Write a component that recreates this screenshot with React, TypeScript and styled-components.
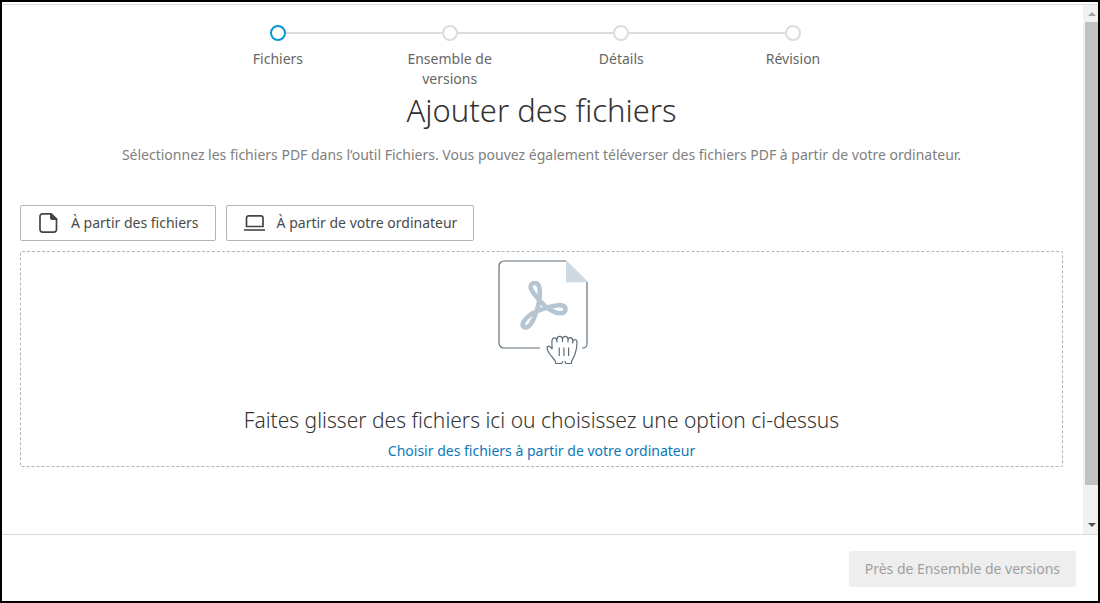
import React from 'react';
import styled, { createGlobalStyle } from 'styled-components';

const GlobalStyle = createGlobalStyle`
  *, *::before, *::after { box-sizing: border-box; }
  body { margin: 0; background: #fff; }
  body, button { font-family: 'Noto Sans', 'Open Sans', sans-serif; }
`;

const Frame = styled.div`
  display: flex;
  flex-direction: column;
  min-height: 100vh;
  padding-top: 2px;
  border: 2px solid #000;
  background: #fff;
`;

const Viewport = styled.div`
  display: flex;
  flex: 1;
  border-top: 1px solid #dcdcdc;
`;

const Content = styled.main`
  flex: 1;
  min-width: 0;
  padding: 20px 20px 20px 18px;
`;

const Steps = styled.ol`
  display: grid;
  grid-template-columns: repeat(4, 1fr);
  width: 67%;
  margin: 0 auto;
  padding: 0 12px 0 0;
  list-style: none;
`;

const Step = styled.li`
  display: flex;
  flex-direction: column;
  align-items: center;
  gap: 8px;
  color: #666;
  font-size: 14px;
  line-height: 20px;
  text-align: center;
`;

const Marker = styled.span`
  display: flex;
  align-items: center;
  width: 100%;
`;

const Line = styled.span<{ $hidden?: boolean }>`
  flex: 1;
  height: 2px;
  background: ${(p) => (p.$hidden ? 'transparent' : '#dcdcdc')};
`;

const Dot = styled.span<{ $active?: boolean }>`
  width: 16px;
  height: 16px;
  border: 2px solid ${(p) => (p.$active ? '#0696d7' : '#dcdcdc')};
  border-radius: 50%;
`;

const StepLabel = styled.span`
  max-width: 104px;
`;

const Title = styled.h1`
  margin: 0;
  color: #333;
  font-size: 31px;
  font-weight: 300;
  line-height: 42px;
  text-align: center;
`;

const Intro = styled.p`
  margin: 14px 0 40px;
  color: #808080;
  font-size: 14px;
  line-height: 20px;
  text-align: center;
`;

const Sources = styled.div`
  display: flex;
  gap: 10px;
  margin-bottom: 10px;
`;

const SourceButton = styled.button`
  display: flex;
  align-items: center;
  gap: 10px;
  height: 36px;
  padding: 0 16px;
  border: 1px solid #b4b4b4;
  border-radius: 2px;
  background: #fff;
  color: #4a4a4a;
  font-size: 14px;
  line-height: 20px;
`;

const DropZone = styled.section`
  display: flex;
  flex-direction: column;
  align-items: center;
  padding: 8px 16px 4px;
  border: 1px dashed #b4b4b4;
  border-radius: 2px;
`;

const DropTitle = styled.h2`
  margin: 40px 0 6px;
  color: #333;
  font-size: 21px;
  font-weight: 300;
  line-height: 28px;
  text-align: center;
`;

const DropLink = styled.a`
  color: #0d78b5;
  font-size: 14px;
  line-height: 22px;
  text-decoration: none;
`;

const ScrollTrack = styled.div`
  display: flex;
  flex-direction: column;
  width: 15px;
  padding-left: 2px;
  background: #f1f1f1;
`;

const ScrollThumb = styled.div`
  flex: 1;
  margin-bottom: 32px;
  background: #c1c1c1;
`;

const Footer = styled.footer`
  display: flex;
  justify-content: flex-end;
  padding: 16px 22px 14px;
  border-top: 1px solid #d8d8d8;
`;

const NextButton = styled.button`
  height: 36px;
  padding: 0 16px;
  border: 0;
  border-radius: 2px;
  background: #eee;
  color: #a0a0a0;
  font-size: 14px;
  line-height: 20px;
`;

const FileIcon = () => (
  <svg width="24" height="24" viewBox="0 0 24 24" fill="none" aria-hidden="true">
    <path d="M14 2.900H5.500a2.500 2.500 0 0 0-2.500 2.500v13.200a2.500 2.500 0 0 0 2.500 2.500h11.500a2.500 2.500 0 0 0 2.500-2.500V8" stroke="#444" strokeWidth="1.700" />
    <path d="M13 2h1.500l5.800 5.500V9H15a2 2 0 0 1-2-2z" fill="#444" />
  </svg>
);

const LaptopIcon = () => (
  <svg width="24" height="24" viewBox="0 0 24 24" fill="none" aria-hidden="true">
    <path d="M3.500 15.500V7a2.200 2.200 0 0 1 2.200-2.200h12.100A2.200 2.200 0 0 1 20 7v8.500z" stroke="#444" strokeWidth="1.700" />
    <path d="M1 19h21" stroke="#6a6a6a" strokeWidth="2" />
  </svg>
);

const PdfDrop = () => (
  <svg width="92" height="106" viewBox="0 0 92 106" fill="none" aria-hidden="true">
    <path d="M70 1H8a5 5 0 0 0-5 5v77a5 5 0 0 0 5 5h36M86 88h1a4 4 0 0 0 4-4V22" stroke="#5f6f7a" strokeWidth="1.200" />
    <path d="M70 0l22.500 22.200H70z" fill="#cddae4" />
    <path
      d="M38.500 23C42 23 43.300 25.500 43.700 29C44.300 36 43 44 40.500 51C39 56 38 59 36 62C34 65.500 32.500 67.500 29.500 67.500C26.500 67.500 26 64.500 27.500 62C30 58 34 54 40 51.500C47 48.800 55 46 62 45.200C67 44.900 69.500 46.500 69.500 49.300C69.500 52 67.500 53.500 64 53.300C57 53 50.500 48 45.500 42.500C41 37.500 36.500 33 34.900 28.500C33.900 25.300 35.500 23 38.500 23Z"
      stroke="#b5c6d2"
      strokeWidth="4.600"
      strokeLinejoin="round"
    />
    <path
      d="M59.500 103.500V101.500C57.500 98.500 56.500 97.500 54.500 95C52.500 92.500 51 90 51.200 87.500C51.500 85.300 54.500 86 56 89C56.500 87 55.500 83 56 80.500C56.500 77 60.500 77 61 80.500V82V79C61.500 75.500 66 75.500 66.500 79V81.500V79C67 75.500 71.500 75.500 72 79V82V80C72.500 76.500 76.500 77 76.700 80.500V83C77 78.500 80.800 78.500 81 82C81.200 87 80.500 90 79 94C78 97 76.500 99.500 75.500 101.500V103.500H69.800L68.800 101.200M59.500 103.500H65.500L67 101.200"
      fill="#fff"
      stroke="#5f6f7a"
      strokeWidth="1.200"
      strokeLinejoin="round"
    />
    <path d="M63.200 87.500v8.500M67.900 87.500v8.500M72.600 87.500v8.500" stroke="#5f6f7a" strokeWidth="1.200" />
  </svg>
);

const ScrollArrow = ({ down = false }: { down?: boolean }) => (
  <svg width="13" height="17" viewBox="0 0 13 17" aria-hidden="true">
    <path d={down ? 'M3 6h8L7 10z' : 'M3 11h8L7 7z'} fill={down ? '#505050' : '#a3a3a3'} />
  </svg>
);

const steps = ['Fichiers', 'Ensemble de versions', 'Détails', 'Révision'];

export default function App() {
  return (
    <>
      <GlobalStyle />
      <Frame>
        <Viewport>
          <Content>
            <Steps>
              {steps.map((label, i) => (
                <Step key={label} aria-current={i === 0 ? 'step' : undefined}>
                  <Marker>
                    <Line $hidden={i === 0} />
                    <Dot $active={i === 0} />
                    <Line $hidden={i === steps.length - 1} />
                  </Marker>
                  <StepLabel>{label}</StepLabel>
                </Step>
              ))}
            </Steps>
            <Title>Ajouter des fichiers</Title>
            <Intro>
              Sélectionnez les fichiers PDF dans l’outil Fichiers. Vous pouvez également téléverser des fichiers PDF à
              partir de votre ordinateur.
            </Intro>
            <Sources>
              <SourceButton type="button">
                <FileIcon />
                À partir des fichiers
              </SourceButton>
              <SourceButton type="button">
                <LaptopIcon />
                À partir de votre ordinateur
              </SourceButton>
            </Sources>
            <DropZone>
              <PdfDrop />
              <DropTitle>Faites glisser des fichiers ici ou choisissez une option ci-dessus</DropTitle>
              <DropLink href="#ordinateur">Choisir des fichiers à partir de votre ordinateur</DropLink>
            </DropZone>
          </Content>
          <ScrollTrack aria-hidden="true">
            <ScrollArrow />
            <ScrollThumb />
            <ScrollArrow down />
          </ScrollTrack>
        </Viewport>
        <Footer>
          <NextButton type="button" disabled>
            Près de Ensemble de versions
          </NextButton>
        </Footer>
      </Frame>
    </>
  );
}
